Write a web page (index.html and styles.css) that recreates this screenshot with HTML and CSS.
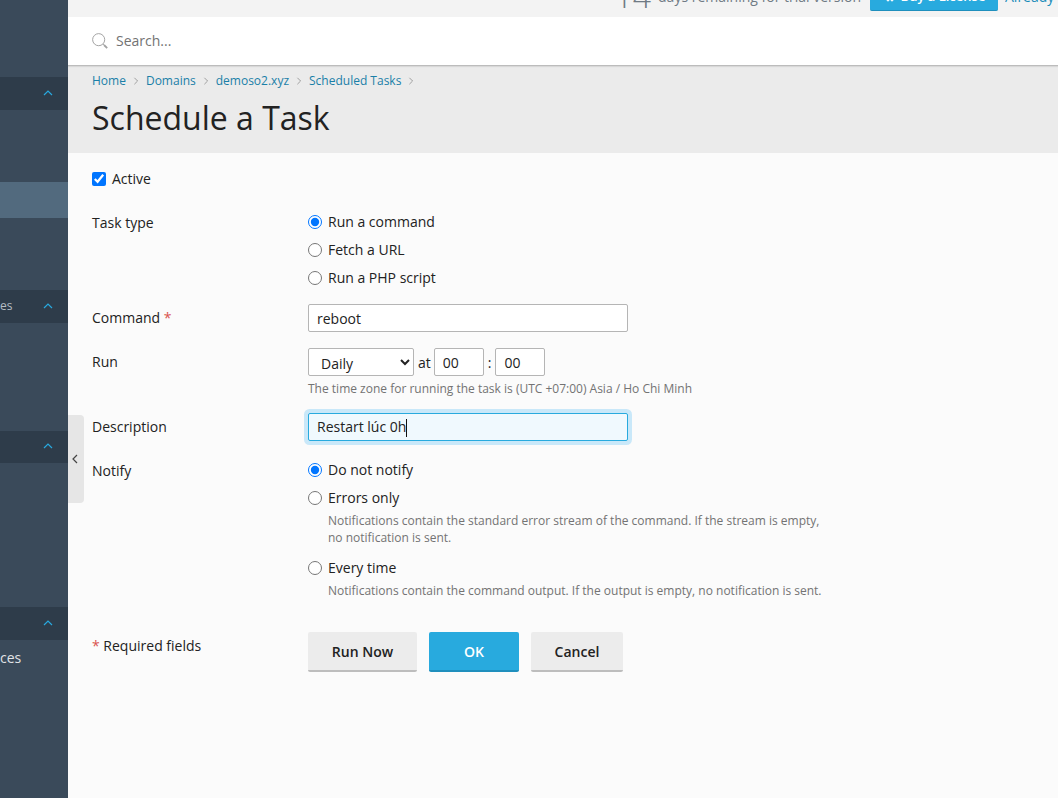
FILE: index.html
```html
<!DOCTYPE html>
<html lang="en">
<head>
    <meta charset="UTF-8">
    <title>Schedule a Task</title>
    <link rel="stylesheet" href="styles.css">
</head>
<body>

<div class="page">
    <aside class="sidebar">
        <div class="nav-head nav-head-1"><svg class="nav-chevron" viewBox="0 0 10 6"><path d="M1 5l4-4 4 4"/></svg></div>
        <div class="nav-item-active"></div>
        <div class="nav-head nav-head-2"><span class="nav-clip-small">es</span><svg class="nav-chevron" viewBox="0 0 10 6"><path d="M1 5l4-4 4 4"/></svg></div>
        <div class="nav-head nav-head-3"><svg class="nav-chevron" viewBox="0 0 10 6"><path d="M1 5l4-4 4 4"/></svg></div>
        <div class="nav-head nav-head-4"><svg class="nav-chevron" viewBox="0 0 10 6"><path d="M1 5l4-4 4 4"/></svg></div>
        <div class="nav-clip">ces</div>
    </aside>

    <main class="main">
        <div class="trial-bar">
            <span class="trial-num">14</span>
            <span class="trial-text">days remaining for trial version</span>
            <span class="buy-btn">
                <svg class="buy-icon" viewBox="0 0 12 12"><path d="M1 1h2l1 6h6l1-4H4"/><circle cx="5" cy="10" r="1"/><circle cx="9" cy="10" r="1"/></svg>
                Buy a License
            </span>
            <span class="trial-link">Already have a license?</span>
        </div>

        <div class="search-bar">
            <svg class="search-icon" viewBox="0 0 18 18"><circle cx="7.5" cy="7.5" r="6.8"/><path d="M12.5 12.5l1 1"/><path class="search-handle" d="M13.5 13.5l3.6 3.6"/></svg>
            <span class="search-text">Search...</span>
        </div>

        <header class="page-head">
            <nav class="crumbs">
                <a>Home</a><svg class="crumb-sep" viewBox="0 0 6 10"><path d="M1 1l4 4-4 4"/></svg>
                <a>Domains</a><svg class="crumb-sep" viewBox="0 0 6 10"><path d="M1 1l4 4-4 4"/></svg>
                <a>demoso2.xyz</a><svg class="crumb-sep" viewBox="0 0 6 10"><path d="M1 1l4 4-4 4"/></svg>
                <a>Scheduled Tasks</a><svg class="crumb-sep" viewBox="0 0 6 10"><path d="M1 1l4 4-4 4"/></svg>
            </nav>
            <h1>Schedule a Task</h1>
        </header>

        <div class="collapse-tab"><svg viewBox="0 0 6 10"><path d="M5 1L1 5l4 4"/></svg></div>

        <form class="task-form">
            <label class="check-row"><input type="checkbox" checked> Active</label>

            <div class="row row-task">
                <div class="row-label">Task type</div>
                <div class="radio-list">
                    <label class="radio"><input type="radio" name="type" checked> Run a command</label>
                    <label class="radio"><input type="radio" name="type"> Fetch a URL</label>
                    <label class="radio"><input type="radio" name="type"> Run a PHP script</label>
                </div>
            </div>

            <div class="row row-command">
                <div class="row-label">Command <span class="req">*</span></div>
                <div><input class="text-input" type="text" value="reboot"></div>
            </div>

            <div class="row row-run">
                <div class="row-label">Run</div>
                <div>
                    <div class="run-line">
                        <select class="run-select"><option>Daily</option></select>
                        <span>at</span>
                        <input class="time-input" type="text" value="00">
                        <span class="time-colon">:</span>
                        <input class="time-input" type="text" value="00">
                    </div>
                    <div class="hint hint-zone">The time zone for running the task is (UTC +07:00) Asia / Ho Chi Minh</div>
                </div>
            </div>

            <div class="row row-desc">
                <div class="row-label">Description</div>
                <div class="focus-input">Restart lúc 0h<span class="caret"></span></div>
            </div>

            <div class="row row-notify">
                <div class="row-label">Notify</div>
                <div class="radio-list">
                    <label class="radio"><input type="radio" name="notify" checked> Do not notify</label>
                    <label class="radio"><input type="radio" name="notify"> Errors only</label>
                    <div class="hint hint-radio">Notifications contain the standard error stream of the command. If the stream is empty, no notification is sent.</div>
                    <label class="radio radio-after-hint"><input type="radio" name="notify"> Every time</label>
                    <div class="hint hint-radio">Notifications contain the command output. If the output is empty, no notification is sent.</div>
                </div>
            </div>

            <div class="row row-buttons">
                <div class="row-label"><span class="req">*</span> Required fields</div>
                <div class="buttons">
                    <button type="button" class="btn btn-run">Run Now</button>
                    <button type="button" class="btn btn-ok">OK</button>
                    <button type="button" class="btn btn-cancel">Cancel</button>
                </div>
            </div>
        </form>
    </main>
</div>

</body>
</html>
```

FILE: styles.css
```css
* {
    box-sizing: border-box;
}

html, body {
    height: 100%;
}

body {
    margin: 0;
    overflow: hidden;
    background-color: #fbfbfb;
    color: #222222;
    font-family: "Open Sans", sans-serif;
    font-size: 14px;
}

.page {
    display: flex;
    height: 798px;
}

/* Sidebar */
.sidebar {
    width: 68px;
    flex-shrink: 0;
    background-color: #3a4a5a;
    display: flex;
    flex-direction: column;
    overflow: hidden;
}

.nav-head {
    height: 33px;
    background-color: #2e3c4a;
    display: flex;
    align-items: center;
    justify-content: flex-end;
    padding-right: 15px;
    flex-shrink: 0;
}

.nav-head-1 { margin-top: 77px; }
.nav-head-2 { margin-top: 72px; }
.nav-head-3 { margin-top: 108px; height: 32px; }
.nav-head-4 { margin-top: 144px; }

.nav-item-active {
    height: 36px;
    margin-top: 72px;
    background-color: #526a7e;
    flex-shrink: 0;
}

.nav-chevron {
    width: 10px;
    height: 6px;
    margin-bottom: 2px;
    fill: none;
    stroke: #28a9df;
    stroke-width: 1.2;
}

.nav-clip-small {
    margin-right: auto;
    margin-bottom: 2px;
    color: #b5bcc4;
    font-size: 12px;
}

.nav-clip {
    margin-top: 8px;
    color: #e0e3e6;
    font-size: 14px;
    line-height: 20px;
}

/* Main column */
.main {
    flex: 1;
    min-width: 0;
    position: relative;
    overflow: hidden;
}

.trial-bar {
    height: 17px;
    background-color: #f3f3f3;
    display: flex;
    justify-content: flex-end;
    align-items: flex-end;
    white-space: nowrap;
    overflow: hidden;
    color: #6f7a84;
}

.trial-num {
    font-size: 32px;
    font-weight: 300;
    line-height: 32px;
    margin-bottom: 5px;
    color: #6f7a84;
    margin-right: 7px;
}

.trial-text {
    line-height: 20px;
    margin-bottom: 10px;
    margin-right: 9px;
}

.buy-btn {
    width: 128px;
    height: 30px;
    margin-bottom: 6px;
    margin-right: 7px;
    background-color: #28aade;
    border-bottom: 1px solid #1f8fbd;
    border-radius: 2px;
    color: #ffffff;
    font-size: 13px;
    font-weight: 600;
    display: flex;
    align-items: center;
    justify-content: center;
    gap: 6px;
    flex-shrink: 0;
}

.buy-icon {
    width: 12px;
    height: 12px;
    fill: #ffffff;
    stroke: #ffffff;
}

.trial-link {
    width: 53px;
    overflow: hidden;
    flex-shrink: 0;
    line-height: 20px;
    margin-bottom: 10px;
    color: #1a8cba;
}

.search-bar {
    height: 49px;
    background-color: #ffffff;
    border-bottom: 1px solid #bcbcbc;
    box-shadow: 0 1px 1px rgba(0, 0, 0, 0.08);
    display: flex;
    align-items: center;
    padding-left: 24px;
    gap: 8px;
    position: relative;
}

.search-icon {
    width: 16px;
    height: 16px;
    fill: none;
    stroke: #a2a2a2;
    stroke-width: 1.1;
}

.search-handle {
    stroke-width: 2;
}

.search-text {
    color: #737373;
    margin-bottom: 2px;
}

.page-head {
    height: 87px;
    background-color: #ebebeb;
    padding: 6px 24px 0;
}

.crumbs {
    display: flex;
    align-items: center;
    font-size: 12px;
    line-height: 18px;
    color: #1a7fa8;
}

.crumb-sep {
    width: 6px;
    height: 8px;
    margin: 0 7px;
    fill: none;
    stroke: #8d8d8d;
    stroke-width: 1;
}

h1 {
    margin: 6px 0 0;
    font-size: 32px;
    font-weight: 400;
    line-height: 44px;
    color: #222222;
}

.collapse-tab {
    position: absolute;
    left: 0;
    top: 415px;
    width: 16px;
    height: 88px;
    background-color: #e6e6e6;
    border-radius: 0 4px 4px 0;
    display: flex;
    align-items: center;
    justify-content: center;
}

.collapse-tab svg {
    width: 6px;
    height: 10px;
    margin-right: 3px;
    fill: none;
    stroke: #444444;
    stroke-width: 1.2;
}

/* Form */
.task-form {
    padding: 0 24px;
}

.check-row {
    display: flex;
    align-items: center;
    gap: 6px;
    height: 20px;
    margin-top: 15px;
}

.check-row input {
    width: 14px;
    height: 14px;
    margin: 0 0 -2px;
    accent-color: #0075ff;
}

.row {
    display: grid;
    grid-template-columns: 216px 1fr;
}

.row-label {
    line-height: 20px;
}

.row-task { margin-top: 24px; }
.row-command { margin-top: 13px; }
.row-run { margin-top: 16px; }
.row-desc { margin-top: 16px; }
.row-notify { margin-top: 19px; }
.row-buttons { margin-top: 33px; }

.row-command .row-label { padding-top: 4px; }
.row-run .row-label { padding-top: 4px; }
.row-desc .row-label { padding-top: 4px; }
.row-task .row-label { padding-top: 1px; }
.row-notify .row-label { padding-top: 1px; }
.row-buttons .row-label { padding-top: 4px; }

.req {
    color: #d9534f;
}

.radio-list {
    display: flex;
    flex-direction: column;
    margin-top: -1px;
}

.radio {
    display: flex;
    align-items: center;
    gap: 6px;
    height: 28px;
    margin-top: -4px;
}

.radio:first-child {
    height: 20px;
    margin-top: 0;
    margin-bottom: 4px;
}

.radio + .radio {
    margin-top: 0;
}

.radio input {
    width: 14px;
    height: 14px;
    margin: 0 0 -1px;
    accent-color: #0075ff;
}

.radio-after-hint {
    margin-top: 7px;
}

.text-input,
.time-input,
.run-select {
    height: 28px;
    border: 1px solid #b5b5b5;
    border-radius: 2px;
    background-color: #ffffff;
    color: #222222;
    font-family: "Open Sans", sans-serif;
    font-size: 14px;
}

.text-input {
    width: 320px;
    padding: 0 8px;
    display: block;
}

.run-line {
    display: flex;
    align-items: center;
    gap: 4px;
}

.run-line span {
    margin-right: -1px;
}

.run-line .time-colon {
    margin: 0;
}

.run-select {
    width: 106px;
    padding: 2px 0 0 8px;
}

.time-input {
    width: 50px;
    padding: 0 8px;
}

.hint {
    color: #737373;
    font-size: 12px;
    line-height: 17px;
}

.hint-zone {
    margin-top: 4px;
}

.hint-radio {
    width: 520px;
    padding-left: 20px;
    margin-top: 1px;
}

.focus-input {
    width: 320px;
    height: 28px;
    border: 1px solid #28aade;
    border-radius: 2px;
    background-color: #f0f9fe;
    box-shadow: 0 0 0 4px #c9e8f9;
    padding: 0 8px;
    line-height: 26px;
}

.caret {
    display: inline-block;
    width: 1px;
    height: 18px;
    background-color: #111111;
    vertical-align: middle;
}

.buttons {
    display: flex;
    gap: 12px;
}

.btn {
    height: 40px;
    border: none;
    border-bottom: 2px solid #bdbdbd;
    border-radius: 2px;
    background-color: #ececec;
    color: #222222;
    font-family: "Open Sans", sans-serif;
    font-size: 14px;
    font-weight: 600;
}

.btn-run { width: 109px; }
.btn-cancel { width: 92px; }

.btn-ok {
    width: 90px;
    background-color: #28aade;
    border-bottom-color: #1f8fbd;
    color: #ffffff;
}
```
